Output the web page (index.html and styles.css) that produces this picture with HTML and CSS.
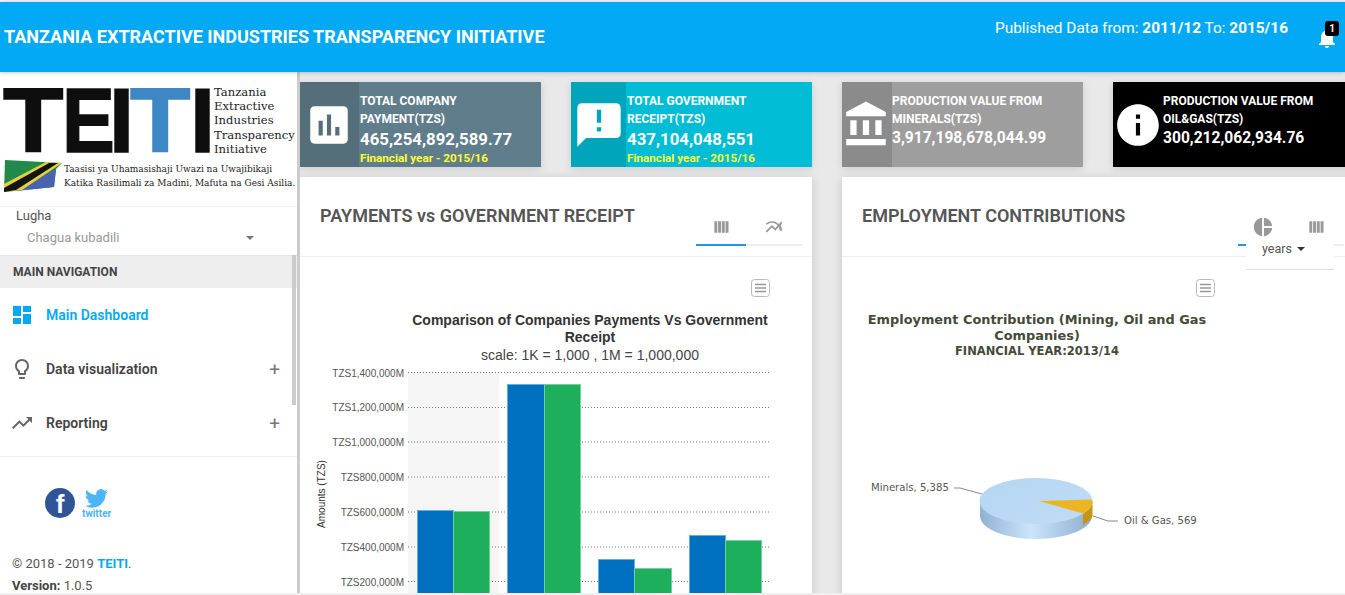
FILE: index.html
```html
<!DOCTYPE html>
<html lang="en">
<head>
    <meta charset="UTF-8">
    <meta name="viewport" content="width=device-width, initial-scale=1.0">
    <title>TEITI Dashboard</title>
    <link rel="stylesheet" href="styles.css">
</head>
<body>
    <!-- Top bar -->
    <header class="topbar">
        <h1 class="brand">TANZANIA EXTRACTIVE INDUSTRIES TRANSPARENCY INITIATIVE</h1>
        <p class="published">Published Data from: <b>2011/12</b> To: <b>2015/16</b></p>
        <div class="bell">
            <svg viewBox="0 0 24 24" width="24" height="24"><path d="M12 22c1.1 0 2-.9 2-2h-4c0 1.1.89 2 2 2zm6-6v-5c0-3.07-1.64-5.64-4.5-6.32V4c0-.83-.67-1.5-1.5-1.5s-1.5.67-1.5 1.5v.68C7.63 5.36 6 7.92 6 11v5l-2 2v1h16v-1l-2-2z"/></svg>
            <span class="bell-count">1</span>
        </div>
    </header>

    <div class="layout">
        <!-- Sidebar -->
        <aside class="sidebar">
            <div class="logo">
                <div class="logo-top">
                    <div class="logo-letters">
                        <span class="letter letter-t1">T</span>
                        <span class="letter letter-e">E</span>
                        <span class="letter letter-i1">I</span>
                        <span class="letter letter-t2">T</span>
                        <span class="letter letter-i2">I</span>
                    </div>
                    <div class="logo-names">Tanzania<br>Extractive<br>Industries<br>Transparency<br>Initiative</div>
                </div>
                <div class="logo-bottom">
                    <svg class="flag" viewBox="0 0 58 32" width="58" height="32">
                        <path d="M1 0 L58 3 L52 9 L50 27 L0 32 Z" fill="#1f8a4a"/>
                        <path d="M52 9 L50 27 L12 31 Z" fill="#4a63b0"/>
                        <path d="M0 24 L42 2 L58 3 L18 30 L0 32 Z" fill="#e3d23c"/>
                        <path d="M0 28 L45 3 L54 3 L12 30 L0 32 Z" fill="#141414"/>
                    </svg>
                    <div class="logo-tagline">Taasisi ya Uhamasishaji Uwazi na Uwajibikaji<br>Katika Rasilimali za Madini, Mafuta na Gesi Asilia.</div>
                </div>
            </div>

            <div class="lang">
                <div class="lang-label">Lugha</div>
                <div class="lang-select">
                    <span>Chagua kubadili</span>
                    <i class="caret"></i>
                </div>
            </div>

            <div class="nav-title">MAIN NAVIGATION</div>
            <nav class="nav">
                <a class="nav-item active">
                    <svg viewBox="0 0 24 24" width="24" height="24"><path d="M3 13h8V3H3v10zm0 8h8v-6H3v6zm10 0h8V11h-8v10zm0-18v6h8V3h-8z"/></svg>
                    <span>Main Dashboard</span>
                </a>
                <a class="nav-item">
                    <svg viewBox="0 0 24 24" width="24" height="24"><path d="M9 21c0 .55.45 1 1 1h4c.55 0 1-.45 1-1v-1H9v1zm3-19C8.14 2 5 5.14 5 9c0 2.38 1.19 4.47 3 5.74V17c0 .55.45 1 1 1h6c.55 0 1-.45 1-1v-2.26c1.81-1.27 3-3.36 3-5.74 0-3.86-3.14-7-7-7zm2.85 11.1l-.85.6V16h-4v-2.3l-.85-.6C7.8 12.16 7 10.63 7 9c0-2.76 2.24-5 5-5s5 2.24 5 5c0 1.63-.8 3.16-2.15 4.1z"/></svg>
                    <span>Data visualization</span>
                    <em class="plus">+</em>
                </a>
                <a class="nav-item">
                    <svg viewBox="0 0 24 24" width="24" height="24"><path d="M16 6l2.29 2.29-4.88 4.88-4-4L2 16.59 3.41 18l6-6 4 4 6.3-6.29L22 12V6z"/></svg>
                    <span>Reporting</span>
                    <em class="plus">+</em>
                </a>
            </nav>

            <div class="social">
                <span class="fb">f</span>
                <div class="tw">
                    <svg viewBox="0 0 24 24" width="23" height="23"><path d="M23.953 4.57a10 10 0 01-2.825.775 4.958 4.958 0 002.163-2.723c-.951.555-2.005.959-3.127 1.184a4.92 4.92 0 00-8.384 4.482C7.69 8.095 4.067 6.13 1.64 3.162a4.822 4.822 0 00-.666 2.475c0 1.71.87 3.213 2.188 3.988a4.904 4.904 0 01-2.228-.616v.06a4.923 4.923 0 003.946 4.827 4.996 4.996 0 01-2.212.085 4.936 4.936 0 004.604 3.417 9.867 9.867 0 01-6.102 2.105c-.39 0-.779-.023-1.17-.067a13.995 13.995 0 007.557 2.209c9.053 0 13.998-7.496 13.998-13.985 0-.21 0-.42-.015-.63A9.935 9.935 0 0024 4.59z"/></svg>
                    <span>twitter</span>
                </div>
            </div>

            <div class="sidebar-foot">
                <p>&copy; 2018 - 2019 <b>TEITI</b>.</p>
                <p><strong>Version:</strong> 1.0.5</p>
            </div>

            <div class="scroll-thumb"></div>
        </aside>

        <!-- Main content -->
        <main class="content">
            <section class="stats">
                <div class="stat stat-slate">
                    <div class="stat-icon">
                        <svg viewBox="0 0 24 24" width="50" height="50"><path d="M19 3H5c-1.1 0-2 .9-2 2v14c0 1.1.9 2 2 2h14c1.1 0 2-.9 2-2V5c0-1.1-.9-2-2-2zM9 17H7v-7h2v7zm4 0h-2V7h2v10zm4 0h-2v-4h2v4z"/></svg>
                    </div>
                    <div class="stat-body">
                        <div class="stat-title">TOTAL COMPANY PAYMENT(TZS)</div>
                        <div class="stat-value">465,254,892,589.77</div>
                        <div class="stat-year">Financial year - 2015/16</div>
                    </div>
                </div>
                <div class="stat stat-cyan">
                    <div class="stat-icon">
                        <svg viewBox="0 0 24 24" width="52" height="52"><path d="M20 2H4c-1.1 0-1.99.9-1.99 2L2 22l4-4h14c1.1 0 2-.9 2-2V4c0-1.1-.9-2-2-2zm-7 9h-2V5h2v6zm0 4h-2v-2h2v2z"/></svg>
                    </div>
                    <div class="stat-body">
                        <div class="stat-title">TOTAL GOVERNMENT RECEIPT(TZS)</div>
                        <div class="stat-value">437,104,048,551</div>
                        <div class="stat-year">Financial year - 2015/16</div>
                    </div>
                </div>
                <div class="stat stat-grey">
                    <div class="stat-icon">
                        <svg viewBox="0 0 24 24" width="53" height="53"><path d="M4 10v7h3v-7H4zm6 0v7h3v-7h-3zM2 22h19v-3H2v3zm14-12v7h3v-7h-3zm-4.5-9L2 6v2h19V6l-9.5-5z"/></svg>
                    </div>
                    <div class="stat-body">
                        <div class="stat-title">PRODUCTION VALUE FROM MINERALS(TZS)</div>
                        <div class="stat-value">3,917,198,678,044.99</div>
                    </div>
                </div>
                <div class="stat stat-black">
                    <div class="stat-icon">
                        <svg viewBox="0 0 24 24" width="50" height="50"><path d="M12 2C6.48 2 2 6.48 2 12s4.48 10 10 10 10-4.48 10-10S17.52 2 12 2zm1 15h-2v-6h2v6zm0-8h-2V7h2v2z"/></svg>
                    </div>
                    <div class="stat-body">
                        <div class="stat-title">PRODUCTION VALUE FROM OIL&amp;GAS(TZS)</div>
                        <div class="stat-value">300,212,062,934.76</div>
                    </div>
                </div>
            </section>

            <section class="panels">
                <!-- Payments chart -->
                <article class="panel">
                    <div class="panel-head">
                        <h2>PAYMENTS vs GOVERNMENT RECEIPT</h2>
                        <div class="tabs">
                            <div class="tab on">
                                <svg viewBox="0 0 24 24" width="20" height="20"><path d="M4 5h3.500v14H4zM8.500 5h3.500v14H8.500zM13 5h3.500v14H13zM17.500 5H21v14h-3.500z"/></svg>
                            </div>
                            <div class="tab">
                                <svg viewBox="0 0 24 24" width="20" height="20"><path d="M22 6.92l-1.41-1.41-2.85 3.21C15.68 6.4 12.83 5 9.61 5 6.72 5 4.07 6.16 2 8l1.42 1.42C5.12 7.93 7.27 7 9.61 7c2.74 0 5.09 1.26 6.77 3.24l-2.88 3.24-4-4L2 16.99l1.5 1.5 6-6.01 4 4 4.05-4.55c.75 1.35 1.25 2.9 1.44 4.55H21.99c-.22-2.3-.95-4.39-2.04-6.14L22 6.92z"/></svg>
                            </div>
                        </div>
                    </div>
                    <svg class="chart" viewBox="300 257 512 340" width="512" height="340">
                        <!-- export button -->
                        <rect class="menu-box" x="751.500" y="279.500" width="18" height="17" rx="3"/>
                        <path class="menu-lines" d="M755 284.500h11M755 288h11M755 291.500h11"/>

                        <text class="bar-title" x="590" y="325">Comparison of Companies Payments Vs Government</text>
                        <text class="bar-title" x="590" y="342">Receipt</text>
                        <text class="bar-sub" x="590" y="360">scale: 1K = 1,000 , 1M = 1,000,000</text>

                        <rect class="band" x="408" y="372" width="91" height="225"/>
                        <path class="grid" d="M408 372.500H771M408 407.500H771M408 442H771M408 477H771M408 512H771M408 547H771M408 581.500H771"/>

                        <text class="axis-label" x="404" y="376.500">TZS1,400,000M</text>
                        <text class="axis-label" x="404" y="411">TZS1,200,000M</text>
                        <text class="axis-label" x="404" y="445.500">TZS1,000,000M</text>
                        <text class="axis-label" x="404" y="481">TZS800,000M</text>
                        <text class="axis-label" x="404" y="516">TZS600,000M</text>
                        <text class="axis-label" x="404" y="551">TZS400,000M</text>
                        <text class="axis-label" x="404" y="585.500">TZS200,000M</text>
                        <text class="axis-name" transform="translate(325 494) rotate(-90)">Amounts (TZS)</text>

                        <rect class="bar-a" x="417.500" y="510.500" width="36" height="90"/>
                        <rect class="bar-b" x="453.500" y="511.500" width="36" height="90"/>
                        <rect class="bar-a" x="507.500" y="384.500" width="37" height="220"/>
                        <rect class="bar-b" x="544.500" y="384.500" width="36" height="220"/>
                        <rect class="bar-a" x="598.500" y="559.500" width="36" height="50"/>
                        <rect class="bar-b" x="634.500" y="568.500" width="37" height="50"/>
                        <rect class="bar-a" x="689.500" y="535.500" width="36" height="70"/>
                        <rect class="bar-b" x="725.500" y="540.500" width="36" height="70"/>
                    </svg>
                </article>

                <!-- Employment pie -->
                <article class="panel">
                    <div class="panel-head">
                        <h2>EMPLOYMENT CONTRIBUTIONS</h2>
                        <div class="tabs">
                            <div class="tab on">
                                <svg viewBox="0 0 24 24" width="22" height="22"><path d="M11 2v20c-5.070-.5-9-4.790-9-10s3.930-9.500 9-10zm2.030 0v8.990H22c-.47-4.740-4.240-8.520-8.970-8.990zm0 11.010V22c4.740-.47 8.500-4.250 8.970-8.990h-8.970z"/></svg>
                            </div>
                            <div class="tab">
                                <svg viewBox="0 0 24 24" width="20" height="20"><path d="M4 5h3.500v14H4zM8.500 5h3.500v14H8.500zM13 5h3.500v14H13zM17.500 5H21v14h-3.500z"/></svg>
                            </div>
                        </div>
                        <div class="years">years <i class="caret caret-dark"></i></div>
                    </div>
                    <svg class="chart" viewBox="842 257 512 340" width="512" height="340">
                        <defs>
                            <linearGradient id="pie-top" x1="0" y1="0" x2="1" y2="1">
                                <stop offset="0" stop-color="#b4d5f2"/>
                                <stop offset="1" stop-color="#c0ddf6"/>
                            </linearGradient>
                            <linearGradient id="pie-wall">
                                <stop offset="0" stop-color="#8fb2d2"/>
                                <stop offset="0.45" stop-color="#cbe5fb"/>
                                <stop offset="1" stop-color="#8dafcd"/>
                            </linearGradient>
                        </defs>

                        <rect class="menu-box" x="1196.500" y="279.500" width="18" height="17" rx="3"/>
                        <path class="menu-lines" d="M1200 284.500h11M1200 288h11M1200 291.500h11"/>

                        <text class="pie-title" x="1037" y="324">Employment Contribution (Mining, Oil and Gas</text>
                        <text class="pie-title" x="1037" y="340">Companies)</text>
                        <text class="pie-sub" x="1037" y="355">FINANCIAL YEAR:2013/14</text>

                        <path class="leader" d="M954 488h6L982 494M1093 516L1108 521h10"/>
                        <text class="pie-label" x="871" y="491">Minerals, 5,385</text>
                        <text class="pie-label" x="1124" y="524">Oil &amp; Gas, 569</text>

                        <path d="M980 501v15a56 23 0 0 0 112 0v-15z" fill="url(#pie-wall)"/>
                        <path d="M1083 514.500l9.500-13.500v15a56 23 0 0 1 -9.500 9z" fill="#c9950f"/>
                        <ellipse cx="1036" cy="501" rx="56.500" ry="23" fill="url(#pie-top)"/>
                        <path d="M1039 501L1091 499.500Q1093 501 1092.500 503Q1090 509 1083 513.500z" fill="#edb523"/>
                    </svg>
                </article>
            </section>
        </main>
    </div>
</body>
</html>
```

FILE: styles.css
```css
/* Basic Styling */
html, body {
    height: 100%;
}

body {
    margin: 0;
    display: flex;
    flex-direction: column;
    overflow: hidden;
    font-family: Roboto, "Liberation Sans", sans-serif;
    background-color: #f0f0f0;
    color: #444;
    padding: 2px 0;
    box-sizing: border-box;
}

p, h1, h2 {
    margin: 0;
}

/* Top bar */
.topbar {
    flex: none;
    height: 70px;
    display: flex;
    align-items: flex-start;
    background-color: #03a9f4;
    color: #fff;
    box-shadow: 0 1px 4px rgba(0, 0, 0, 0.2);
    position: relative;
    z-index: 2;
}

.brand {
    margin: 23px 0 0 4px;
    font-size: 18px;
    line-height: 24px;
    font-weight: 700;
}

.published {
    margin: 15px 0 0 auto;
    font-size: 15.400px;
    line-height: 22px;
}

.bell {
    position: relative;
    width: 24px;
    height: 24px;
    margin: 24px 6px 0 27px;
    fill: #fff;
}

.bell-count {
    position: absolute;
    top: -5px;
    left: 10px;
    width: 14px;
    height: 15px;
    border-radius: 3px;
    background-color: #000;
    font-size: 10px;
    font-weight: 700;
    line-height: 15px;
    text-align: center;
}

.layout {
    flex: 1;
    min-height: 0;
    display: flex;
}

/* Sidebar */
.sidebar {
    flex: none;
    width: 297px;
    position: relative;
    background-color: #fff;
    border-right: 3px solid #ccc;
    overflow: hidden;
}

.logo {
    height: 116px;
    padding: 18px 0 0 3px;
    border-bottom: 1px solid #eee;
}

.logo-top {
    display: flex;
    height: 62px;
}

.logo-letters {
    display: flex;
    height: 62px;
    font-family: "Liberation Sans", Arial, sans-serif;
    font-size: 90px;
    font-weight: 700;
    line-height: 62px;
    color: #0e0e0e;
    -webkit-text-stroke: 1.500px currentColor;
}

.letter {
    display: block;
    transform-origin: left center;
}

.letter-t1 { width: 59px; transform: scaleX(1.1); }
.letter-e { width: 47px; transform: scaleX(0.88); }
.letter-i1 { width: 21px; }
.letter-t2 { width: 60px; transform: scaleX(1.1); color: #3d88c4; }
.letter-i2 { width: 24px; }

.logo-names {
    margin-top: -5px;
    font-family: "DejaVu Serif", serif;
    font-size: 11.600px;
    line-height: 14.200px;
    color: #222;
    white-space: nowrap;
}

.logo-bottom {
    display: flex;
    align-items: center;
    margin: 8px 0 0 1px;
}

.flag {
    flex: none;
}

.logo-tagline {
    margin-left: 2px;
    font-family: "DejaVu Serif Condensed", "DejaVu Serif", serif;
    font-size: 10px;
    line-height: 14px;
    white-space: nowrap;
    color: #222;
}

.lang {
    height: 49px;
    padding-left: 16px;
    border-bottom: 1px solid #e4e4e4;
    box-sizing: border-box;
}

.lang-label {
    padding-top: 1px;
    font-size: 13px;
    line-height: 15px;
    color: #555;
}

.lang-select {
    display: flex;
    align-items: center;
    justify-content: space-between;
    width: 227px;
    margin: 6px 0 0 11px;
    font-size: 13px;
    line-height: 18px;
    color: #999;
}

.caret {
    width: 0;
    height: 0;
    border-left: 4px solid transparent;
    border-right: 4px solid transparent;
    border-top: 4px solid #777;
}

.nav-title {
    height: 32px;
    padding-left: 13px;
    background-color: #eee;
    font-size: 12px;
    font-weight: 700;
    line-height: 33px;
    color: #444;
}

.nav {
    padding-bottom: 6px;
    border-bottom: 1px solid #eee;
}

.nav-item {
    display: flex;
    align-items: center;
    height: 54px;
    padding: 0 17px 0 10px;
    font-size: 14px;
    font-weight: 600;
    color: #444;
    fill: #666;
}

.nav-item span {
    margin-left: 12px;
}

.nav-item.active {
    color: #03a9f4;
    fill: #03a9f4;
}

.plus {
    margin-left: auto;
    font-style: normal;
    font-size: 19px;
    font-weight: 400;
    color: #777;
}

.social {
    display: flex;
    align-items: flex-start;
    padding: 31px 0 0 45px;
}

.fb {
    width: 30px;
    height: 30px;
    border-radius: 50%;
    background-color: #2f5597;
    color: #fff;
    font-family: "Liberation Sans", sans-serif;
    font-size: 26px;
    font-weight: 700;
    line-height: 33px;
    text-align: center;
}

.tw {
    display: flex;
    flex-direction: column;
    align-items: center;
    margin: -1px 0 0 7px;
    fill: #4cb5f5;
}

.tw span {
    font-size: 10px;
    font-weight: 700;
    line-height: 8px;
    color: #4cb5f5;
}

.sidebar-foot {
    padding: 35px 0 0 12px;
    font-size: 13px;
    line-height: 22px;
    color: #555;
}

.sidebar-foot b {
    color: #03a9f4;
}

.sidebar-foot strong {
    color: #444;
    font-weight: 700;
}

.scroll-thumb {
    position: absolute;
    top: 183px;
    right: 1px;
    width: 4px;
    height: 150px;
    background-color: #ccc;
}

/* Main content */
.content {
    flex: 1;
    min-width: 0;
    overflow: hidden;
    padding-top: 10px;
    background-color: #e9e9e9;
}

.stats {
    display: grid;
    grid-template-columns: repeat(4, 241px);
    gap: 30px;
}

.stat {
    display: flex;
    height: 85px;
    color: #fff;
    fill: #fff;
    box-shadow: 0 2px 8px rgba(0, 0, 0, 0.12);
}

.stat-icon {
    flex: none;
    display: flex;
    align-items: center;
    justify-content: center;
}

.stat-body {
    padding: 10px 0 0 1px;
}

.stat-title {
    font-size: 12px;
    font-weight: 700;
    line-height: 18px;
}

.stat-value {
    font-size: 16.800px;
    font-weight: 700;
    line-height: 22px;
}

.stat-year {
    margin-top: 1px;
    font-size: 11.700px;
    font-weight: 700;
    line-height: 14px;
    color: #ffff33;
}

.stat-slate { background-color: #607d8b; }
.stat-slate .stat-icon { width: 57px; padding-right: 2px; background-color: #546e7a; }

.stat-cyan { background-color: #00bcd4; }
.stat-cyan .stat-icon { width: 55px; background-color: #00a5bb; }

.stat-grey { background-color: #9e9e9e; }
.stat-grey .stat-icon { width: 50px; background-color: #8b8b8b; }
.stat-grey .stat-body { padding-left: 0; }
.stat-grey .stat-value { font-size: 15.600px; line-height: 20px; }

.stat-black { background-color: #000; }
.stat-black .stat-icon { width: 50px; }
.stat-black .stat-value { font-size: 15.600px; line-height: 20px; }
.stat-black .stat-body { padding-left: 0; }

.panels {
    display: grid;
    grid-template-columns: repeat(2, 512px);
    gap: 30px;
    margin-top: 10px;
}

.panel {
    height: 440px;
    background-color: #fff;
    box-shadow: 0 2px 10px rgba(0, 0, 0, 0.15);
}

.panel-head {
    position: relative;
    display: flex;
    align-items: flex-end;
    justify-content: space-between;
    height: 69px;
    padding: 0 10px 10px 20px;
    border-bottom: 1px solid #eee;
}

.panel-head h2 {
    margin-bottom: 18px;
    font-size: 18px;
    font-weight: 600;
    line-height: 24px;
    color: #555;
}

.tabs {
    display: flex;
    border-bottom: 2px solid #eee;
}

.tab {
    display: flex;
    justify-content: center;
    align-items: center;
    width: 50px;
    height: 20px;
    margin-bottom: -2px;
    padding-bottom: 7px;
    border-bottom: 2px solid transparent;
    fill: #999;
}

.tab + .tab {
    width: 56px;
}

.tab.on {
    border-bottom-color: #2196e3;
}

.years {
    position: absolute;
    top: 63px;
    left: 404px;
    width: 72px;
    height: 29px;
    padding-left: 16px;
    background-color: #fff;
    border-bottom: 1px solid #ddd;
    font-size: 12.500px;
    line-height: 18px;
    color: #555;
}

.caret-dark {
    display: inline-block;
    margin-left: 2px;
    vertical-align: 2px;
    border-top-color: #333;
}

/* Charts */
.chart {
    display: block;
}

.menu-box {
    fill: #fff;
    stroke: #bbb;
}

.menu-lines {
    fill: none;
    stroke: #999;
    stroke-width: 1.500;
}

.bar-title {
    font-family: "Liberation Sans", Arial, sans-serif;
    font-size: 14px;
    font-weight: 700;
    text-anchor: middle;
    fill: #333;
}

.bar-sub {
    font-family: "Liberation Sans", Arial, sans-serif;
    font-size: 14px;
    text-anchor: middle;
    fill: #444;
}

.band {
    fill: #f5f5f5;
}

.grid {
    fill: none;
    stroke: #777;
    stroke-dasharray: 1 2;
}

.axis-label {
    font-family: "Liberation Sans", Arial, sans-serif;
    font-size: 10px;
    text-anchor: end;
    fill: #555;
}

.axis-name {
    font-family: "Liberation Sans", Arial, sans-serif;
    font-size: 10px;
    text-anchor: middle;
    fill: #333;
}

.bar-a {
    fill: #0070c0;
    stroke: #5eb1dd;
}

.bar-b {
    fill: #1eaf5c;
    stroke: #6fd0a0;
}

.pie-title {
    font-family: "DejaVu Sans", Verdana, sans-serif;
    font-size: 12.900px;
    font-weight: 700;
    text-anchor: middle;
    fill: #444a38;
}

.pie-sub {
    font-family: "DejaVu Sans", Verdana, sans-serif;
    font-size: 11.500px;
    font-weight: 700;
    text-anchor: middle;
    fill: #444a38;
}

.pie-label {
    font-family: "DejaVu Sans", Verdana, sans-serif;
    font-size: 10.100px;
    fill: #555;
}

.leader {
    fill: none;
    stroke: #888;
}
```
